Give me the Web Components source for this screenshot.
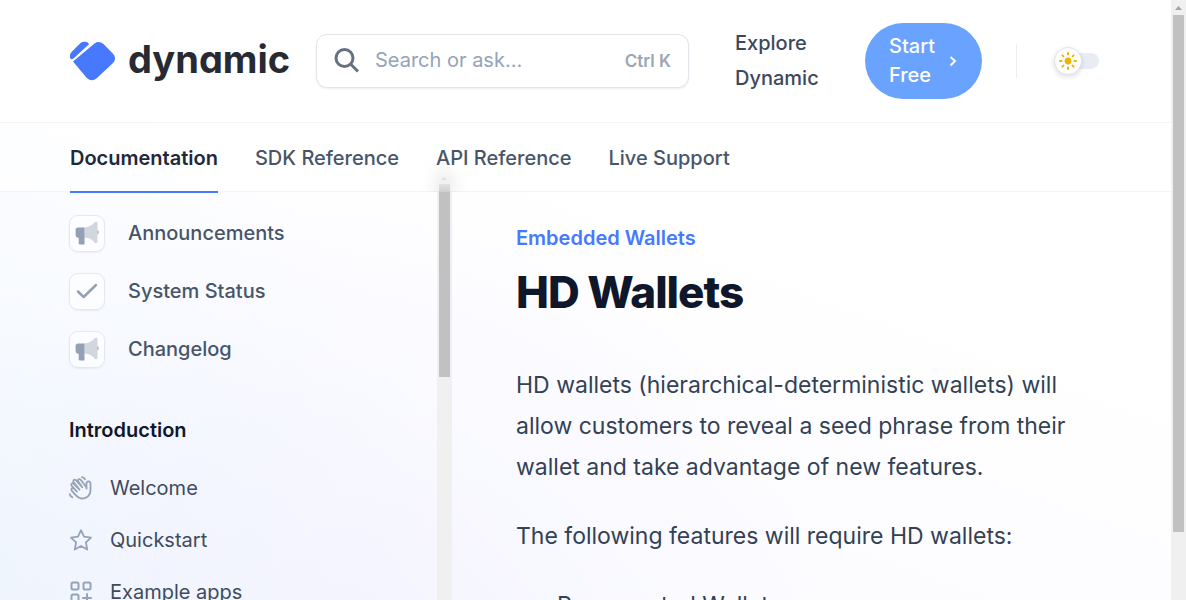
<!DOCTYPE html>
<html lang="en">
<head>
<meta charset="utf-8">
<meta name="viewport" content="width=device-width, initial-scale=1">
<title>HD Wallets - Dynamic</title>
<style>
  html, body { margin: 0; height: 100%; }
  body {
    font-family: Inter, "Liberation Sans", sans-serif;
    font-size: 20px;
    color: #475569;
    --brand: #4779ff;
    --ink: #0f172a;
    --strong: #1e293b;
    --body: #334155;
    --muted: #475569;
    --soft: #94a3b8;
    --line: #f3f4f6;
    overflow: hidden;
  }
</style>
</head>
<body>
<docs-page>
  <site-header slot="header"></site-header>
  <nav-tabs slot="header"></nav-tabs>
  <side-nav slot="sidebar">
    <anchor-link slot="anchors" icon="megaphone">Announcements</anchor-link>
    <anchor-link slot="anchors" icon="check">System Status</anchor-link>
    <anchor-link slot="anchors" icon="megaphone">Changelog</anchor-link>
    <span slot="heading">Introduction</span>
    <page-link icon="wave">Welcome</page-link>
    <page-link icon="star">Quickstart</page-link>
    <page-link icon="grid">Example apps</page-link>
  </side-nav>
  <doc-article>
    <span slot="eyebrow">Embedded Wallets</span>
    <span slot="title">HD Wallets</span>
    <doc-text>HD wallets (hierarchical-deterministic wallets) will allow customers to reveal a seed phrase from their wallet and take advantage of new features.</doc-text>
    <doc-text>The following features will require HD wallets:</doc-text>
    <doc-list><span>Regenerated Wallets</span></doc-list>
  </doc-article>
</docs-page>

<script>
const define = (name, html, setup) => {
  const template = document.createElement('template');
  template.innerHTML = html;
  customElements.define(name, class extends HTMLElement {
    constructor() {
      super();
      this.attachShadow({ mode: 'open' }).append(template.content.cloneNode(true));
    }
    connectedCallback() { if (setup) setup(this, this.shadowRoot); }
  });
};

const icons = {
  megaphone: `<svg viewBox="0 0 24 24" width="24" height="24">
    <path fill="#d1d6df" d="M9.500 6.600C14 6.400 17.500 4 19.600 1.300C20.600 .2 22.500 .5 22.500 2V20.600C22.500 22.200 20.600 22.700 19.600 21.400C17.500 18.800 14 16.800 9.500 16.600Z"/>
    <path fill="#94a0b4" d="M3 6.400H9.500V23.200Q9.500 23.600 9 23.600H5Q3.700 23.600 3.700 22.300V17Q.6 16.600.6 13.800V9Q.6 6.400 3 6.400ZM22.500 9.200Q23.700 9.900 23.700 11.300T22.500 13.500Z"/></svg>`,
  check: `<svg viewBox="0 0 24 24" width="24" height="24"><path d="M3 12.500L8.600 18L21 6" fill="none" stroke="#94a0b4" stroke-width="2.500" stroke-linecap="round" stroke-linejoin="round"/></svg>`,
  wave: `<svg viewBox="0 0 24 24" width="24" height="24" fill="none" stroke="#94a3b8" stroke-width="1.800" stroke-linecap="round" stroke-linejoin="round">
    <path d="M17.500 12.500V7.200Q17.700 5.300 19.500 5.300T21.500 7.300V14.500C21.500 19 18 22.600 13.500 22.600C10.500 22.600 8.500 21.200 6.700 19.200L2.700 14.700C1.400 13 3.600 11.200 5 12.600L8 15.600M8 15.600L2.700 9.800C1.400 8.200 3.400 6.400 4.900 7.900L10.500 13.500M10.500 13.500L4.700 6.200C3.500 4.500 5.700 2.800 7.100 4.300L13.200 11.200M13.200 11.200L9.200 5.400C8.200 3.600 10.400 2.300 11.700 3.800L17.500 11.500"/>
    <path d="M13 1.200Q15 1.400 16 3.200M.8 18.200Q1.300 20.300 3.300 21.300"/></svg>`,
  star: `<svg viewBox="0 0 24 24" width="24" height="24"><path d="M12 2.200L15 8.700L22 9.600L16.900 14.400L18.200 21.500L12 18L5.800 21.500L7.100 14.400L2 9.600L9 8.700Z" fill="none" stroke="#94a3b8" stroke-width="1.800" stroke-linejoin="round"/></svg>`,
  grid: `<svg viewBox="0 0 24 24" width="24" height="24" fill="none" stroke="#94a3b8" stroke-width="2" stroke-linecap="round"><rect x="2.500" y="2.500" width="7" height="7" rx="1.500"/><rect x="14.500" y="2.500" width="7" height="7" rx="1.500"/><rect x="2.500" y="14.500" width="7" height="7" rx="1.500"/><path d="M18 14V22M14 18H22"/></svg>`
};
const putIcon = (host, root) => { root.querySelector('.icon').innerHTML = icons[host.getAttribute('icon')] || ''; };

define('scroll-track', `
  <style>
    :host { display: flex; flex-direction: column; width: 15px; background: #f0f0f0; flex: none; }
    svg { display: block; width: 15px; height: 15px; }
    :host([headless]) svg { display: none; }
    .thumb { width: 11px; margin: 0 auto; background: #c1c1c1; height: var(--thumb, 50%); }
  </style>
  <svg viewBox="0 0 15 15" aria-hidden="true"><path d="M4 10L7.500 6L11 10Z" fill="#a3a3a3"/></svg>
  <div class="thumb"></div>`);

define('docs-page', `
  <style>
    :host {
      display: flex; height: 100vh; overflow: hidden;
      background:
        radial-gradient(circle at 30% 112%, rgba(238, 237, 255, .5), rgba(246, 245, 255, 0) 44%),
        radial-gradient(circle at -4% 100%, rgba(232, 243, 252, .6), rgba(244, 249, 255, 0) 38%),
        linear-gradient(200deg, #fff 35%, #fafaff 100%);
    }
    .view { flex: 1; min-width: 0; display: flex; flex-direction: column; }
    header { flex: none; background: rgba(255, 255, 255, .5); }
    .columns { flex: 1; min-height: 0; display: flex; }
    main { flex: 1; min-width: 0; overflow: hidden; }
    .page { --thumb: 517px; }
  </style>
  <div class="view">
    <header><slot name="header"></slot></header>
    <div class="columns"><slot name="sidebar"></slot><main><slot></slot></main></div>
  </div>
  <scroll-track class="page"></scroll-track>`);

define('brand-logo', `
  <style>
    :host { display: block; flex: none; width: 220px; }
    a { display: flex; align-items: center; gap: 12px; color: #272a33; text-decoration: none; }
    svg { display: block; flex: none; width: 47px; height: 40px; }
    span { padding-bottom: 4px; font-size: 38px; line-height: 44px; font-weight: 700; font-feature-settings: "cv11"; }
  </style>
  <a href="#" aria-label="dynamic home">
    <svg viewBox="0 0 47 40" aria-hidden="true">
      <g fill="#4779ff"><path d="M11.500 2Q14 .2 16.500 .8Q19.500 1.300 20 3.200L4.500 17.500Q2.500 19 1.300 17.500Q0 13.600 3 10.500Z"/>
      <path d="M4 20.500L25.500 2.400Q30 -.8 34.500 3L44.300 13Q48 17.600 44 22L28 37Q22.800 41.500 17.800 37Z"/></g>
    </svg>
    <span>dynamic</span>
  </a>`);

define('search-box', `
  <style>
    :host { display: block; flex: 1; min-width: 0; }
    label { display: flex; align-items: center; box-sizing: border-box; height: 54px; padding: 0 17px; gap: 15px;
      background: #fff; border: 1px solid #e3e5ea; border-radius: 11px; box-shadow: 0 1px 2px rgba(15, 23, 42, .08); }
    svg { flex: none; display: block; }
    input { flex: 1; min-width: 0; border: 0; outline: 0; padding: 0; background: none; font: inherit; line-height: 28px; color: var(--body); }
    input::placeholder { color: #94a3b8; opacity: 1; }
    kbd { font-family: inherit; font-size: 17px; line-height: 28px; font-weight: 600; color: #9ca5b3; }
    input { padding-bottom: 2px; }
  </style>
  <label>
    <svg width="26" height="26" viewBox="0 0 26 26" fill="none" stroke="#667085" stroke-width="3" aria-hidden="true"><circle cx="10.500" cy="10" r="8.500"/><path d="M16.500 16L24 23.500"/></svg>
    <input type="text" placeholder="Search or ask..." aria-label="Search or ask">
    <kbd>Ctrl K</kbd>
  </label>`);

define('theme-toggle', `
  <style>
    :host { display: block; flex: none; }
    button { display: flex; align-items: center; width: 45px; height: 30px; padding: 0; border: 0; background: none; }
    .rail { width: 34px; height: 16px; margin-left: 11px; border-radius: 8px; background: #e9edf3; display: flex; align-items: center; }
    .knob { flex: none; width: 28px; height: 28px; box-sizing: border-box; margin-left: -11px; border-radius: 50%; background: #fff; border: 1px solid #e2e4ec;
      box-shadow: 0 2px 5px rgba(15, 23, 42, .14); display: grid; place-items: center; }
  </style>
  <button type="button" aria-label="Toggle dark mode"><span class="rail"><span class="knob">
    <svg width="20" height="20" viewBox="0 0 20 20" fill="#eab308" stroke="#eab308" stroke-width="2" stroke-linecap="round" aria-hidden="true">
      <circle cx="10" cy="10" r="2.800" stroke-width="1.200"/>
      <path d="M10 2V3.500M10 16.500V18M2 10H3.500M16.500 10H18M4.400 4.400L5.400 5.400M14.600 14.600L15.600 15.600M4.400 15.600L5.400 14.600M14.600 5.400L15.600 4.400"/>
    </svg></span></span></button>`);

define('site-header', `
  <style>
    :host { display: flex; align-items: center; height: 122px; padding: 0 72px 0 69px; border-bottom: 1px solid var(--line); }
    .explore { flex: none; width: 84px; margin: 0 46px; line-height: 35px; font-weight: 500; color: #3c485a; text-decoration: none; }
    search-box { margin-left: 27px; }
    .start { flex: none; display: flex; align-items: center; gap: 10px; width: 117px; height: 76px; box-sizing: border-box; padding: 0 23px 0 24px;
      border: 0; border-radius: 38px; background: #69a3ff; color: #fff; font: inherit; font-weight: 500; line-height: 29px; text-align: left; }
    .start span { width: 50px; }
    hr { flex: none; width: 1px; height: 34px; margin: 0 37px 0 34px; border: 0; background: #eceef1; }
  </style>
  <brand-logo></brand-logo>
  <search-box></search-box>
  <a class="explore" href="#">Explore Dynamic</a>
  <button class="start" type="button"><span>Start Free</span><svg width="8" height="12" viewBox="0 0 8 12" fill="none" stroke="#fff" stroke-width="2" aria-hidden="true"><path d="M1.500 2L6 6L1.500 10.500"/></svg></button>
  <hr>
  <theme-toggle></theme-toggle>`);

define('nav-tabs', `
  <style>
    :host { display: block; border-bottom: 1px solid var(--line); }
    nav { display: flex; gap: 37px; height: 68px; padding: 0 70px; }
    a { box-sizing: border-box; height: 70px; line-height: 70px; font-weight: 500; color: var(--muted); text-decoration: none; white-space: nowrap; }
    a.active { font-weight: 600; color: var(--strong); border-bottom: 2px solid var(--brand); }
  </style>
  <nav aria-label="Sections">
    <a class="active" href="#" aria-current="page">Documentation</a>
    <a href="#">SDK Reference</a>
    <a href="#">API Reference</a>
    <a href="#">Live Support</a>
  </nav>`);

define('side-nav', `
  <style>
    :host { display: flex; flex: none; width: 452px; position: relative; }
    nav { flex: 1; padding: 22px 0 0 69px; overflow: hidden; }
    .anchors { display: grid; gap: 20px; }
    h5 { margin: 48px 0 24px; font-size: 20px; line-height: 28px; font-weight: 600; color: var(--ink); }
    .links { display: grid; gap: 12px; }
    scroll-track { --thumb: 185px; }
    .under { position: absolute; right: -18px; top: -30px; width: 51px; height: 30px; pointer-events: none; overflow: hidden; }
    .haze { width: 11px; height: 30px; margin: 10px auto 0; background: #bbb; filter: blur(9px); opacity: .5; }
    .tip { position: absolute; left: 20px; bottom: 0; width: 11px; height: 8px; background: linear-gradient(#e2e2e2, #cfcfcf); }
    .arrow { position: absolute; left: 22px; bottom: 12px; border: 3px solid transparent; border-top: 0; border-bottom-color: #e0e0e0; }
  </style>
  <nav aria-label="Documentation">
    <div class="anchors"><slot name="anchors"></slot></div>
    <h5><slot name="heading"></slot></h5>
    <div class="links"><slot></slot></div>
  </nav>
  <scroll-track headless></scroll-track>
  <div class="under" aria-hidden="true"><div class="haze"></div><div class="tip"></div><div class="arrow"></div></div>`);

define('anchor-link', `
  <style>
    :host { display: block; }
    a { display: flex; align-items: center; gap: 23px; color: var(--muted); text-decoration: none; font-weight: 500; line-height: 38px; }
    .icon { display: grid; place-items: center; box-sizing: border-box; width: 36px; height: 37px; border: 1px solid #e6e8ed; border-radius: 9px;
      background: rgba(255, 255, 255, .6); box-shadow: 0 1px 2px rgba(15, 23, 42, .06); }
    svg { display: block; }
  </style>
  <a href="#"><span class="icon"></span><slot></slot></a>`, putIcon);

define('page-link', `
  <style>
    :host { display: block; }
    a { display: flex; align-items: center; gap: 17px; color: #3e4b5e; text-decoration: none; line-height: 40px; }
    .icon { display: block; flex: none; width: 24px; height: 24px; line-height: 0; }
  </style>
  <a href="#"><span class="icon"></span><slot></slot></a>`, putIcon);

define('doc-article', `
  <style>
    :host { display: block; padding: 32px 72px 0 64px; }
    .eyebrow { margin: 0; line-height: 28px; font-weight: 600; color: var(--brand); }
    h1 { margin: 13px 0 46px; font-size: 44px; line-height: 54px; font-weight: 800; letter-spacing: -1px; color: var(--ink); }
    .prose { display: grid; gap: 28px; }
  </style>
  <p class="eyebrow"><slot name="eyebrow"></slot></p>
  <h1><slot name="title"></slot></h1>
  <div class="prose"><slot></slot></div>`);

define('doc-text', `
  <style>
    :host { display: block; }
    p { margin: 0; font-size: 23px; line-height: 41px; color: var(--body); }
  </style>
  <p><slot></slot></p>`);

define('doc-list', `
  <style>
    :host { display: block; }
    ul { margin: 0; padding-left: 41px; font-size: 23px; line-height: 41px; color: var(--body); }
  </style>
  <ul><li><slot></slot></li></ul>`);
</script>
</body>
</html>
